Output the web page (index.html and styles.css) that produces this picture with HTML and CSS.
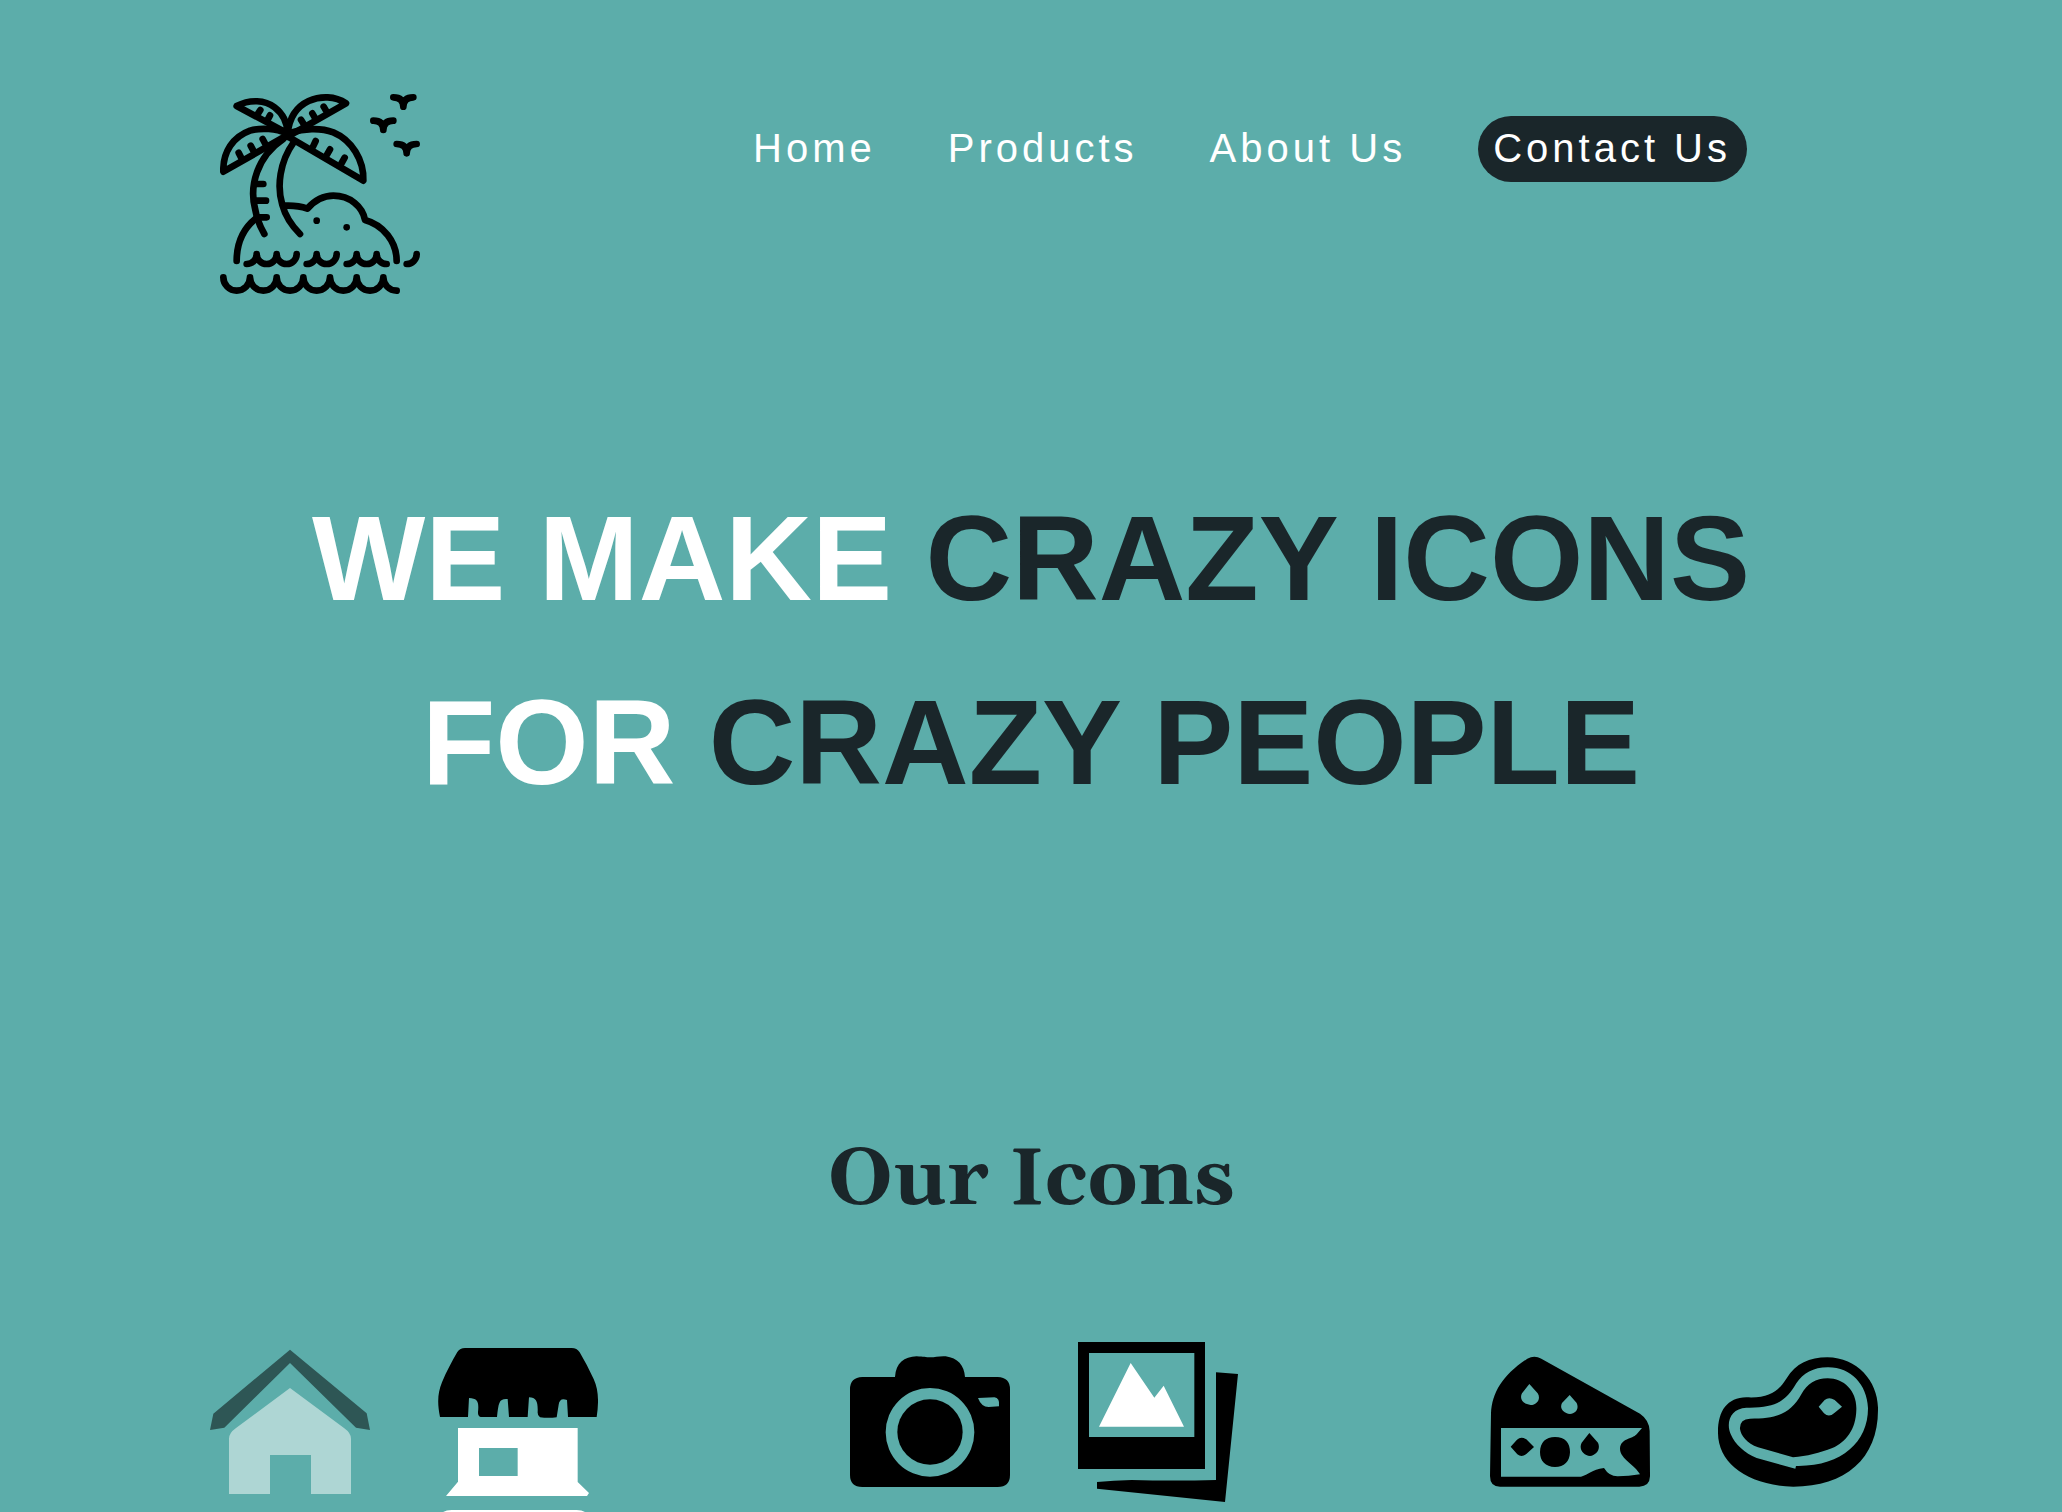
FILE: index.html
```html
<!DOCTYPE html>
<html lang="en">
<head>
<meta charset="utf-8">
<meta name="viewport" content="width=device-width, initial-scale=1">
<title>Crazy Icons</title>
<link rel="stylesheet" href="styles.css">
</head>
<body>
<header class="header">
  <a class="logo" href="#" aria-label="Crazy Icons">
    <svg class="logo-art" viewBox="60 42 600 600" aria-hidden="true">
      <g fill="none" stroke="#000" stroke-width="20" stroke-linecap="round" stroke-linejoin="round">
        <path d="M263 160L110 78C150 57 195 60 224 82C250 102 262 130 263 160Z"/>
        <path d="M263 160C268 112 290 80 326 63C362 47 405 48 438 70L263 170"/>
        <path d="M263 165L70 275C68 215 100 170 150 152C185 142 230 146 258 160"/>
        <path d="M268 172L490 302C492 240 455 180 400 157C360 142 310 146 272 158"/>
        <path d="M172 104L181 90M202 121L210 106M311 132L303 119M344 112L337 100M378 92L371 80"/>
        <path d="M124 234L116 218M160 212L152 197M196 192L188 177M339 200L347 183M381 224L390 208M425 249L434 233"/>
        <path d="M250 177C170 230 148 320 165 385C170 415 180 440 193 462M281 187C239 245 230 320 247 375C257 412 278 440 300 462"/>
        <path d="M166 312H190M165 362H198M172 412H200"/>
        <path d="M255 377C280 376 300 378 322 386C345 360 370 347 400 347C450 347 488 380 495 420C550 435 590 485 590 543M168 415C130 445 110 490 110 543"/>
        <path d="M140 552a30 30 0 0 0 30-30a30 30 0 0 0 60 0a30 30 0 0 0 60 0M320 552a30 30 0 0 0 30-30a30 30 0 0 0 60 0M440 552a30 30 0 0 0 30-30a30 30 0 0 0 60 0a30 30 0 0 0 30 30M620 552a30 30 0 0 0 30-30"/>
        <path d="M70 592a40 40 0 0 0 80 0a40 40 0 0 0 80 0a40 40 0 0 0 80 0a40 40 0 0 0 80 0a40 40 0 0 0 80 0a40 40 0 0 0 80 0a40 40 0 0 0 40 40"/>
        <path d="M580 52Q610 52 610 80Q610 52 640 52M520 122Q550 122 550 150Q550 122 580 122M590 192Q620 192 620 220Q620 192 650 192"/>
      </g>
      <circle cx="263" cy="164" r="15"/>
      <circle cx="350" cy="422" r="10"/>
      <circle cx="440" cy="442" r="10"/>
    </svg>
  </a>
  <nav class="nav">
    <a class="nav-link" href="#">Home</a>
    <a class="nav-link" href="#">Products</a>
    <a class="nav-link" href="#">About Us</a>
    <a class="nav-link nav-link-contact" href="#">Contact Us</a>
  </nav>
</header>
<main>
  <h1 class="headline">WE MAKE <span class="accent">CRAZY ICONS</span><br>FOR <span class="accent">CRAZY PEOPLE</span></h1>
  <section>
    <h2 class="section-title">Our Icons</h2>
    <div class="icon-row">
      <div class="icon-pair">
        <svg class="icon" viewBox="30 36 480 480" aria-hidden="true">
          <path fill="#2e5655" d="M270 59L500 250L510 300L468 293L270 99L73 293L30 300L40 251Z"/>
          <path fill="#aed6d4" d="M270 174L432 294Q453 309 453 326V492H333V375H210V492H87V326Q87 309 108 294Z"/>
        </svg>
        <svg class="icon icon-shop" viewBox="714 36 480 510" aria-hidden="true">
          <path d="M795 54H1115Q1131 54 1139 67Q1161 104 1181 147C1197 181 1196 222 1190 261H1104L1101 210Q1079 201 1076 224L1070 262Q1045 265 1020 262Q1012 258 1013 245C1014 216 1009 202 987 202L983 261H927L923 207C897 205 896 217 891 261H842Q833 259 834 246C837 216 834 205 807 204L804 261H720C712 222 712 190 726 157C740 123 756 94 772 66Q780 54 795 54Z"/>
          <path fill="#fff" fill-rule="evenodd" d="M774 294H1133V456L1167 489L1161 498H738L774 455ZM837 354V438H953V354ZM714 580Q714 540 755 540H1130Q1170 540 1170 580Z"/>
        </svg>
      </div>
      <div class="icon-pair">
        <svg class="icon" viewBox="60 36 480 480" aria-hidden="true">
          <path fill-rule="evenodd" d="M195 141C198 99 222 80 260 79C281 80 287 82 301 82C316 82 326 78 347 79C383 84 403 106 405 141H503Q540 142 540 178V435Q540 471 503 471H97Q60 471 60 435V178Q60 142 97 141ZM300 174A133 133 0 1 0 300 440A133 133 0 1 0 300 174ZM444 204Q454 231 476 231L507 229Q510 203 493 202Z"/>
          <circle cx="300" cy="306" r="98"/>
        </svg>
        <svg class="icon" viewBox="744 36 480 480" aria-hidden="true">
          <path fill-rule="evenodd" d="M744 36H1125V417H744ZM777 69V321H1093V69Z"/>
          <path d="M1158 127L1224 132L1185 516L801 476V456Q850 451 905 450Q1030 453 1158 450Z"/>
          <path fill="#fff" d="M807 290L902 99L973 203L1001 167L1062 290Z"/>
        </svg>
      </div>
      <div class="icon-pair">
        <svg class="icon" viewBox="60 36 480 480" aria-hidden="true">
          <path fill-rule="evenodd" d="M172 86Q193 74 214 86L510 251Q538 270 539 303L540 435Q541 469 508 470H92Q60 471 60 438L63 250C66 187 98 135 172 86ZM93 294V440H333C356 435 364 418 402 414Q418 440 444 439Q475 439 510 433C497 406 450 387 450 356C452 325 486 328 500 313L516 294ZM178 162L203 190C214 207 200 225 182 225C160 223 147 207 156 190ZM299 195L320 219C328 236 317 250 300 252C279 248 268 235 276 219Z"/>
          <path d="M122 350L141 329Q153 318 169 328L192 351L169 372Q155 383 142 373ZM255 321C285 321 300 338 300 367C299 395 283 411 255 411C226 410 210 394 210 366C211 337 227 321 255 321ZM358 309L384 338C393 358 378 375 360 378C341 377 325 358 335 338Z"/>
        </svg>
        <svg class="icon" viewBox="744 36 480 480" aria-hidden="true">
          <path fill-rule="evenodd" d="M829 202C901 206 927 180 949 146C978 100 1018 82 1072 82C1165 83 1226 158 1224 240C1224 386 1126 470 970 470C831 466 743 399 744 307C744 242 772 203 829 202ZM829 233C782 235 766 278 783 314C795 342 824 369 860 384L976 416L978 408C1114 411 1195 336 1194 234C1191 163 1142 111 1073 112C1030 112 999 130 979 160C949 210 922 235 829 233Z"/>
          <path fill-rule="evenodd" d="M840 266C923 266 962 250 994 193C1012 161 1037 145 1073 145C1123 145 1161 184 1159 239C1158 298 1128 336 1087 354C1050 368 1010 379 969 382L864 352C831 341 812 315 810 297Q808 268 840 266ZM1046 230L1064 210Q1077 200 1094 210L1116 230L1093 249Q1077 264 1062 250Z"/>
        </svg>
      </div>
    </div>
  </section>
</main>
</body>
</html>
```
FILE: styles.css
```css
* {
  box-sizing: border-box;
}

body {
  margin: 0;
  background: #5cadaa;
  color: #fff;
  font-family: "Liberation Sans", Helvetica, Arial, sans-serif;
}

.header {
  display: flex;
  justify-content: space-between;
  align-items: flex-start;
  padding: 94px 315px 0 220px;
}

.logo-art {
  display: block;
  width: 200px;
  height: 200px;
}

.nav {
  display: flex;
  gap: 72px;
  margin-top: 22px;
}

.nav-link {
  padding: 9px 0 11px;
  color: #fff;
  font-size: 40px;
  line-height: 46px;
  letter-spacing: 4px;
  text-decoration: none;
  white-space: nowrap;
}

.nav-link-contact {
  padding-right: 16px;
  padding-left: 15px;
  border-radius: 33px;
  background: #1a262a;
}

.headline {
  margin: 172px 0 0;
  font-size: 120px;
  line-height: 184px;
  text-align: center;
}

.accent {
  color: #1a262a;
}

.section-title {
  margin: 292px 0 106px;
  color: #1a262a;
  font-family: Georgia, Gelasio, "DejaVu Serif", serif;
  font-size: 80px;
  line-height: 110px;
  text-align: center;
}

.icon-row {
  display: flex;
  justify-content: space-between;
  align-items: flex-start;
  padding: 0 184px 0 210px;
}

.icon-pair {
  display: flex;
  align-items: flex-start;
  gap: 68px;
}

.icon {
  display: block;
  width: 160px;
  height: 160px;
}

.icon-shop {
  height: 170px;
}
```
